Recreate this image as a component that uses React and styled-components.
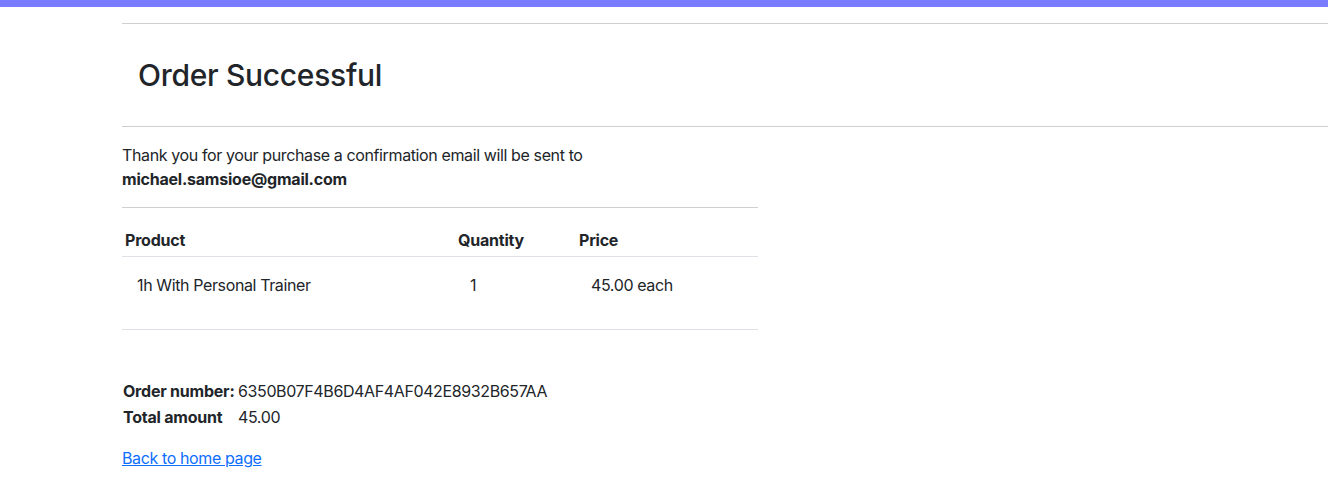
import React from 'react'
import styled, { createGlobalStyle } from 'styled-components'

const GlobalStyle = createGlobalStyle`
  body {
    margin: 0;
    font-family: Inter, "Liberation Sans", sans-serif;
    font-size: 16px;
    line-height: 1.5;
    letter-spacing: -0.38px;
    color: #212529;
    background: #fff;
  }
`

const TopBar = styled.div`
  height: 7px;
  background: #7a7cff;
`

const Page = styled.main`
  padding: 16px 0 0 122px;
`

const Rule = styled.hr`
  margin: 0;
  border: 0;
  border-top: 1px solid #cfcfcf;
`

const Title = styled.h2`
  margin: 0;
  padding: 32px 16px 31px;
  font-size: 30px;
  font-weight: 500;
  line-height: 1.3;
  letter-spacing: -0.3px;
`

const Intro = styled.p`
  margin: 16px 0 16px;
  strong { font-weight: 700; letter-spacing: -0.22px; }
`

const Summary = styled.div`
  width: 636px;
`

const Table = styled.table`
  width: 100%;
  border-collapse: collapse;
  margin-top: 19px;
  th {
    text-align: left;
    font-weight: 700;
    letter-spacing: -0.22px;
    padding: 1px 3px 4px;
    border-bottom: 1px solid #dee2e6;
  }
  td {
    padding: 16px 15px 32px;
    border-bottom: 1px solid #dee2e6;
  }
`

const Details = styled.dl`
  margin: 49px 0 0 1px;
  display: grid;
  grid-template-columns: 115px auto;
  row-gap: 2px;
  dt { font-weight: 700; letter-spacing: -0.22px; }
  dd { margin: 0; }
`

const HomeLink = styled.a`
  display: inline-block;
  margin-top: 17px;
  color: #0d6efd;
  text-decoration: underline;
`

const App = () => {
  return (
    <>
      <GlobalStyle />
      <TopBar />
      <Page>
        <Rule />
        <Title>Order Successful</Title>
        <Rule />
        <Intro>
          Thank you for your purchase a confirmation email will be sent to<br />
          <strong>michael.samsioe@gmail.com</strong>
        </Intro>
        <Summary>
          <Rule />
          <Table>
            <colgroup>
              <col style={{ width: 333 }} />
              <col style={{ width: 121 }} />
              <col />
            </colgroup>
            <thead>
              <tr>
                <th>Product</th>
                <th>Quantity</th>
                <th>Price</th>
              </tr>
            </thead>
            <tbody>
              <tr>
                <td>1h With Personal Trainer</td>
                <td>1</td>
                <td>45.00 each</td>
              </tr>
            </tbody>
          </Table>
        </Summary>
        <Details>
          <dt>Order number:</dt>
          <dd>6350B07F4B6D4AF4AF042E8932B657AA</dd>
          <dt>Total amount</dt>
          <dd>45.00</dd>
        </Details>
        <HomeLink href='/'>Back to home page</HomeLink>
      </Page>
    </>
  )
}

export default App
